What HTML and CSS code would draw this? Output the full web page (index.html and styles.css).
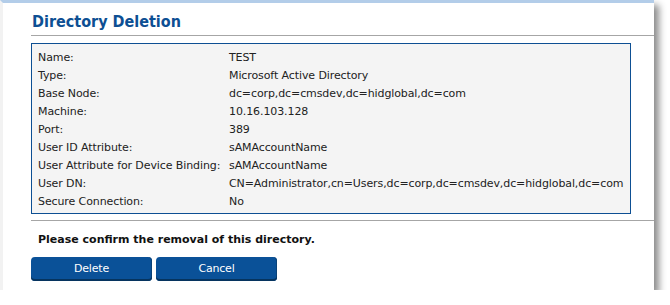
FILE: index.html
```html
<!DOCTYPE html>
<html lang="en">
<head>
    <meta charset="UTF-8">
    <title>Directory Deletion</title>
    <link rel="stylesheet" href="styles.css">
</head>
<body>

    <div class="dialog">
        <h1 class="title">Directory Deletion</h1>

        <div class="details">
            <div class="label">Name:</div><div class="value">TEST</div>
            <div class="label">Type:</div><div class="value">Microsoft Active Directory</div>
            <div class="label">Base Node:</div><div class="value">dc=corp,dc=cmsdev,dc=hidglobal,dc=com</div>
            <div class="label">Machine:</div><div class="value">10.16.103.128</div>
            <div class="label">Port:</div><div class="value">389</div>
            <div class="label">User ID Attribute:</div><div class="value">sAMAccountName</div>
            <div class="label">User Attribute for Device Binding:</div><div class="value">sAMAccountName</div>
            <div class="label">User DN:</div><div class="value">CN=Administrator,cn=Users,dc=corp,dc=cmsdev,dc=hidglobal,dc=com</div>
            <div class="label">Secure Connection:</div><div class="value">No</div>
        </div>

        <div class="confirm">
            <p>Please confirm the removal of this directory.</p>
            <div class="actions">
                <button class="btn">Delete</button>
                <button class="btn">Cancel</button>
            </div>
        </div>
    </div>

</body>
</html>
```

FILE: styles.css
```css
:root {
    --blue: #0d4f93;
    --btn-blue: #0a5198;
    --line: #a6a6a6;
    --box-bg: #f4f4f4;
}

body {
    margin: 0;
    background: #fff;
    font-family: 'DejaVu Sans', sans-serif;
    font-size: 11px;
    letter-spacing: -0.1px;
    color: #111;
}

.dialog {
    width: 623px;
    padding: 0 0 9px 28px;
    background: #fff;
    border-top: 3px solid #b3cde9;
    border-left: 3px solid #f2f2f2;
    box-shadow: 5px 5px 7px rgba(0, 0, 0, 0.45);
}

.title {
    margin: 0;
    padding: 9px 0 3px 1px;
    font-family: 'DejaVu Sans Condensed', 'DejaVu Sans', sans-serif;
    font-size: 16px;
    font-weight: bold;
    letter-spacing: 0;
    color: var(--blue);
    line-height: 20px;
    border-bottom: 1px solid var(--line);
}

.details {
    display: grid;
    grid-template-columns: 191px auto;
    width: 586px;
    margin: 7px 0 0;
    padding: 5px 6px 2px;
    background: var(--box-bg);
    border: 1px solid var(--blue);
    line-height: 18px;
    color: #222;
}

.confirm {
    margin-top: 6px;
    border-top: 1px solid var(--line);
}

.confirm p {
    margin: 11px 0 9px 7px;
    font-weight: bold;
    letter-spacing: 0;
    line-height: 16px;
}

.actions {
    display: flex;
    gap: 4px;
}

.btn {
    width: 121px;
    height: 24px;
    padding: 0 0 2px;
    border: none;
    border-radius: 4px;
    background: var(--btn-blue);
    box-shadow: inset 0 -2px 0 #06345f, inset -1px 0 0 #0a4278;
    color: #fff;
    font-family: 'DejaVu Sans', sans-serif;
    font-size: 11px;
    letter-spacing: -0.2px;
}
```
